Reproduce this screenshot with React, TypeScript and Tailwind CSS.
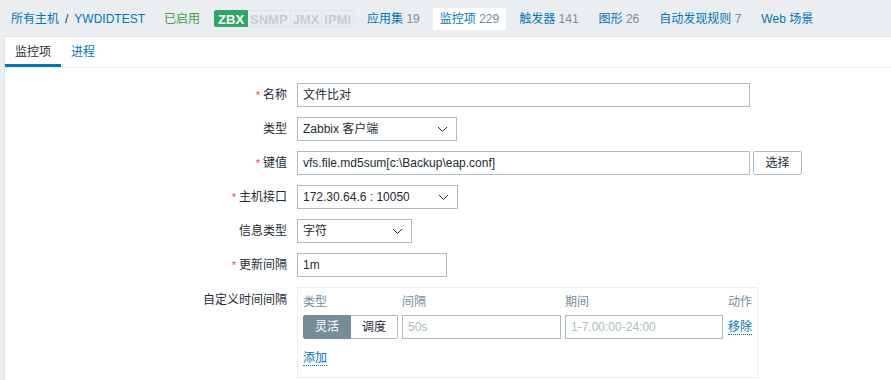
const FONT = "font-['Liberation_Sans','Noto_Sans_CJK_SC',sans-serif]";

const NAV = [
  { label: "应用集", count: "19" },
  { label: "监控项", count: "229", active: true },
  { label: "触发器", count: "141" },
  { label: "图形", count: "26" },
  { label: "自动发现规则", count: "7" },
  { label: "Web 场景", count: "" },
];

function Chevron() {
  return (
    <svg width="11" height="7" viewBox="0 0 11 7" className="shrink-0">
      <polyline points="1,1 5.5,5.5 10,1" fill="none" stroke="#1f2c33" strokeWidth="1" />
    </svg>
  );
}

function Label({ text, required }: { text: string; required?: boolean }) {
  return (
    <div className="w-[292px] shrink-0 pr-[10px] text-right text-[#1f2c33] leading-[24px]">
      {required && <span className="text-[#e2553f] mr-[3px] text-[11px]">*</span>}
      {text}
    </div>
  );
}

function Select({ value, width }: { value: string; width: string }) {
  return (
    <div className={`${width} h-[24px] border border-[#acbbc2] bg-white flex items-center justify-between pl-[5px] pr-[8px] text-[#1f2c33]`}>
      <span>{value}</span>
      <Chevron />
    </div>
  );
}

function Input({ value, width, placeholder }: { value: string; width: string; placeholder?: boolean }) {
  return (
    <div className={`${width} h-[24px] border border-[#acbbc2] bg-white flex items-center px-[5px] ${placeholder ? "text-[#acbbc2]" : "text-[#1f2c33]"}`}>
      {value}
    </div>
  );
}

export default function App() {
  return (
    <div className={`${FONT} text-[12px] bg-[#ebeef0] w-[891px] h-[380px] overflow-hidden`}>
      <div className="h-[36px] flex items-center pl-[11px] pt-[1px]">
        <span className="text-[#0275b8]">所有主机</span>
        <span className="text-[#1f2c33] mx-[6px]">/</span>
        <span className="text-[#0275b8]">YWDIDTEST</span>
        <span className="text-[#429e47] ml-[19px]">已启用</span>
        <div className="flex ml-[14px] h-[17px] leading-[17px] text-[13px] font-bold">
          <span className="bg-[#2ea664] text-white px-[3px] border border-[#2ea664] rounded-l-[2px]">ZBX</span>
          <span className="text-[#c5ced3] border border-[#dfe4e7] border-l-0 px-[2px]">SNMP</span>
          <span className="text-[#c5ced3] border border-[#dfe4e7] border-l-0 px-[2px]">JMX</span>
          <span className="text-[#c5ced3] border border-[#dfe4e7] border-l-0 px-[2px] rounded-r-[2px]">IPMI</span>
        </div>
        <div className="flex items-center ml-[6px] gap-[6px]">
          {NAV.map((n) => (
            <div
              key={n.label}
              className={`px-[7px] h-[22px] leading-[22px] ${n.active ? "bg-white" : ""}`}
            >
              <span className="text-[#0275b8]">{n.label}</span>
              {n.count && <span className="text-[#768d99]"> {n.count}</span>}
            </div>
          ))}
        </div>
      </div>

      <div className="ml-[4px] bg-white border-l border-t border-[#dfe4e7] h-[344px]">
        <div className="flex h-[31px] border-b border-[#ebeef0]">
          <div className="px-[10px] text-[#1f2c33] border-b-[3px] border-[#0275b8] pt-[6px]">监控项</div>
          <div className="px-[10px] text-[#0275b8] pt-[6px]">进程</div>
        </div>

        <div className="pt-[15px] flex flex-col gap-[10px]">
          <div className="flex">
            <Label text="名称" required />
            <Input value="文件比对" width="w-[453px]" />
          </div>
          <div className="flex">
            <Label text="类型" />
            <Select value="Zabbix 客户端" width="w-[160px]" />
          </div>
          <div className="flex">
            <Label text="键值" required />
            <Input value="vfs.file.md5sum[c:\Backup\eap.conf]" width="w-[453px]" />
            <div className="ml-[3px] w-[49px] h-[24px] border border-[#acbbc2] rounded-[2px] flex items-center justify-center text-[#1f2c33]">
              选择
            </div>
          </div>
          <div className="flex">
            <Label text="主机接口" required />
            <Select value="172.30.64.6 : 10050" width="w-[161px]" />
          </div>
          <div className="flex">
            <Label text="信息类型" />
            <Select value="字符" width="w-[115px]" />
          </div>
          <div className="flex">
            <Label text="更新间隔" required />
            <Input value="1m" width="w-[150px]" />
          </div>
          <div className="flex">
            <div className="w-[292px] shrink-0 pr-[10px] text-right text-[#1f2c33] pt-[4px]">自定义时间间隔</div>
            <div className="w-[461px] h-[91px] border border-[#ebeef0] px-[5px] pt-[5px]">
              <div className="flex text-[#768d99] h-[18px] items-center">
                <div className="w-[99px]">类型</div>
                <div className="w-[163px]">间隔</div>
                <div className="w-[163px]">期间</div>
                <div className="flex-1 text-right">动作</div>
              </div>
              <div className="flex items-center mt-[4px]">
                <div className="flex h-[24px]">
                  <div className="w-[48px] bg-[#768d99] border border-[#768d99] text-white flex items-center justify-center rounded-l-[2px]">灵活</div>
                  <div className="w-[47px] border border-l-0 border-[#acbbc2] text-[#1f2c33] flex items-center justify-center rounded-r-[2px]">调度</div>
                </div>
                <div className="ml-[4px]">
                  <Input value="50s" width="w-[159px]" placeholder />
                </div>
                <div className="ml-[4px]">
                  <Input value="1-7,00:00-24:00" width="w-[158px]" placeholder />
                </div>
                <div className="flex-1 text-right">
                  <span className="text-[#0275b8] border-b border-dotted border-[#0275b8]">移除</span>
                </div>
              </div>
              <div className="mt-[10px]">
                <span className="text-[#0275b8] border-b border-dotted border-[#0275b8]">添加</span>
              </div>
            </div>
          </div>
        </div>
      </div>
    </div>
  );
}
